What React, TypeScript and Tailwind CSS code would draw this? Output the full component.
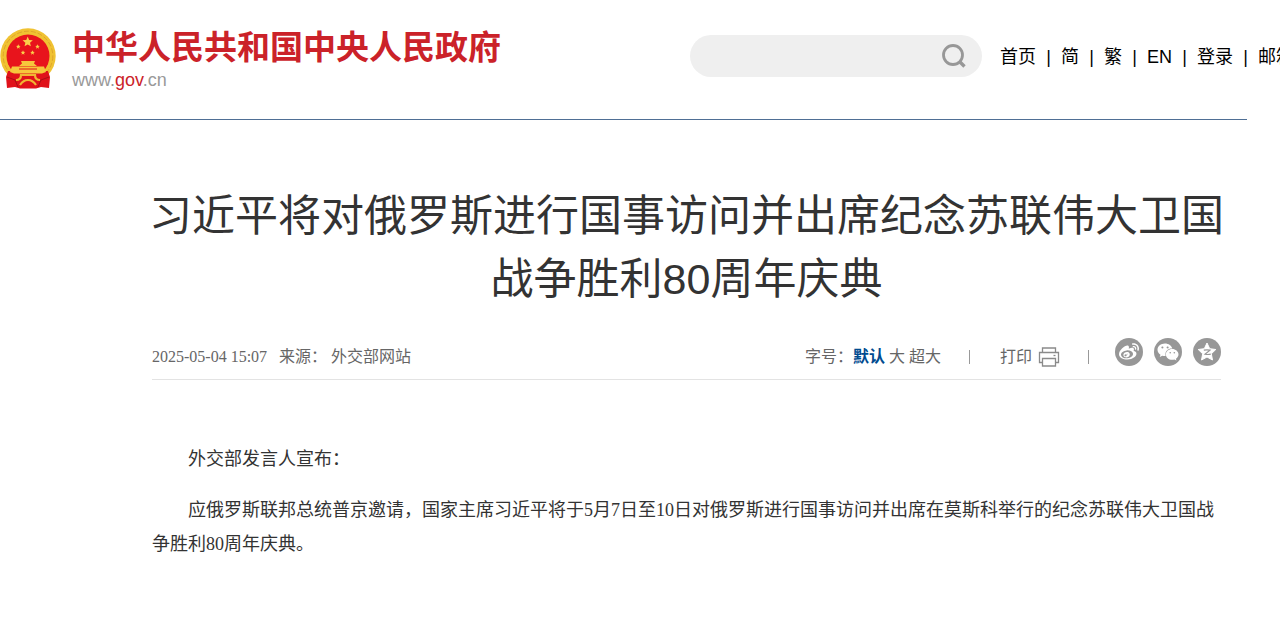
import { FaWeibo, FaWeixin } from 'react-icons/fa';

const navLinks = ['首页', '简', '繁', 'EN', '登录', '邮箱'];

const fontSizes = ['默认', '大', '超大'];

const Star = ({ cx, cy, r }: { cx: number; cy: number; r: number }) => {
  const points = Array.from({ length: 10 }, (_, i) => {
    const radius = i % 2 === 0 ? r : r * 0.45;
    const angle = (Math.PI / 5) * i - Math.PI / 2;
    return `${cx + radius * Math.cos(angle)},${cy + radius * Math.sin(angle)}`;
  });
  return <polygon points={points.join(' ')} />;
};

const Emblem = () => (
  <svg viewBox="0 0 56 61" className="h-[61px] w-14 shrink-0" aria-hidden="true">
    <circle cx="28" cy="28" r="27.700" fill="#f0c232" />
    <circle cx="28" cy="28" r="24.800" fill="none" stroke="#e0a52a" strokeWidth="1" strokeDasharray="5 2" />
    <circle cx="28" cy="28" r="21.500" fill="#e8141c" />
    <g fill="#fbd04a">
      <Star cx={27.7} cy={14} r={5.4} />
      <Star cx={18.3} cy={18.7} r={2.4} />
      <Star cx={37.5} cy={18.7} r={2.4} />
      <Star cx={23} cy={24.7} r={2.4} />
      <Star cx={32.5} cy={24.7} r={2.4} />
    </g>
    {/* red drapery under the gate */}
    <path d="M8 43h40l2 6-1 11-8-1-5 1.500H20L15 59l-8 1-1-11z" fill="#e0121a" />
    {/* gate */}
    <g fill="#f6c73c">
      <path d="M21 33h14l-1 2.500 3 2.500h-18l3-2.500z" />
      <path d="M12 38.500h32l2 5.500-4 1.500H14L10 44z" />
    </g>
    <path d="M19 41h18" stroke="#e0121a" strokeWidth="1" />
    {/* gear and ribbon */}
    <path
      d="M16 52c4 0 5-3 5-5h14c0 2 1 5 5 5M20 57c2-3 4-5 8-5s6 2 8 5"
      fill="none"
      stroke="#f0b632"
      strokeWidth="2.200"
    />
    <path d="M7 49l8 3 3 7M49 49l-8 3-3 7" fill="none" stroke="#a90f15" strokeWidth="1" />
  </svg>
);

const SearchIcon = () => (
  <svg viewBox="0 0 24 24" className="size-6" fill="none" stroke="#979797" strokeWidth="2.800">
    <circle cx="11" cy="11" r="9.500" />
    <path d="M17.500 17.500l5 5" strokeWidth="3.400" />
  </svg>
);

const PrinterIcon = () => (
  <svg viewBox="0 0 22 20" className="h-5 w-[22px]" fill="none" stroke="#8a8a8a" strokeWidth="1.300">
    <path d="M4.500 5.500V1h13v4.500M4.500 15.500H1.500v-10h19v10h-3" />
    <path d="M4.500 11.500h13V19h-13z" />
    <path d="M15.500 8.500h2" />
  </svg>
);

const QzoneIcon = () => (
  <svg viewBox="0 0 20 20" className="size-5">
    <path
      d="M10 1l2.700 5.700 6.100.8-4.500 4.300 1.200 6.200L10 15l-5.500 3 1.200-6.200L1.200 7.500l6.100-.8z"
      fill="#fff"
      stroke="#fff"
      strokeLinejoin="round"
    />
    <path d="M6.800 8.200c2-.4 4.200-.4 6.200 0l-5 4c1.800.4 3.800.4 5.800 0" fill="none" stroke="#979797" strokeWidth="1.200" />
  </svg>
);

const shareLinks = [
  { label: '微博', icon: <FaWeibo className="size-5" /> },
  { label: '微信', icon: <FaWeixin className="size-[22px]" /> },
  { label: 'QQ空间', icon: <QzoneIcon /> },
];

const Header = () => (
  <header className="mr-[33px] flex h-[120px] items-start border-b border-[#4f6f95] pt-7">
    <a href="#" className="flex shrink-0 items-start gap-4">
      <Emblem />
      <span className="flex flex-col">
        <span className="text-[33px] leading-10 font-bold text-[#cb2229]">中华人民共和国中央人民政府</span>
        <span className="text-lg leading-6 text-[#999]">
          www.<span className="text-[#cb2229]">gov</span>.cn
        </span>
      </span>
    </a>
    <div className="flex flex-1 shrink-0 items-center justify-end pt-[7px]">
      <form className="flex h-[42px] w-[292px] shrink-0 items-center rounded-full bg-[#efefef] pr-4 pl-5">
        <input type="text" aria-label="搜索" className="min-w-0 flex-1 bg-transparent outline-none" />
        <button type="button" aria-label="搜索">
          <SearchIcon />
        </button>
      </form>
      <nav className="-mr-[47px] ml-[18px] flex shrink-0 pt-0.5 text-lg leading-7 whitespace-nowrap text-black">
        {navLinks.map((link, i) => (
          <span key={link} className="flex">
            {i > 0 && <span className="w-[25px] text-center">|</span>}
            <a href="#">{link}</a>
          </span>
        ))}
      </nav>
    </div>
  </header>
);

const ArticleMeta = () => (
  <div className="flex h-[45px] items-center justify-between border-b border-[#e3e3e3] font-['Liberation_Serif','Noto_Sans_CJK_SC',serif] text-base text-[#666]">
    <div className="flex gap-3">
      <time>2025-05-04 15:07</time>
      <span>来源： 外交部网站</span>
    </div>
    <div className="flex items-center">
      <div className="flex gap-1">
        <span className="-mr-1">字号：</span>
        {fontSizes.map((size, i) => (
          <button key={size} type="button" className={i === 0 ? 'font-bold text-[#004a8f]' : ''}>
            {size}
          </button>
        ))}
      </div>
      <span className="ml-7 h-3.5 w-px bg-[#999]" />
      <button type="button" className="ml-[30px] flex items-center gap-1.5">
        打印
        <PrinterIcon />
      </button>
      <span className="ml-7 h-3.5 w-px bg-[#999]" />
      <div className="ml-[26px] flex gap-[11px] pb-2.5">
        {shareLinks.map(({ label, icon }) => (
          <a
            key={label}
            href="#"
            aria-label={label}
            className="flex size-7 items-center justify-center rounded-full bg-[#979797] text-white"
          >
            {icon}
          </a>
        ))}
      </div>
    </div>
  </div>
);

export default function App() {
  return (
    <div className="min-h-screen overflow-x-hidden bg-white font-['Liberation_Sans','Noto_Sans_CJK_SC',sans-serif]" lang="zh-CN">
      <Header />
      <main className="mr-[59px] ml-[152px] pt-[65px] pb-16">
        <h1 className="-mx-1 mb-6 text-center text-[43px] leading-[63px] text-[#333]">
          习近平将对俄罗斯进行国事访问并出席纪念苏联伟大卫国战争胜利80周年庆典
        </h1>
        <ArticleMeta />
        <article className="space-y-[17px] pt-[62px] font-['Liberation_Serif','Noto_Sans_CJK_SC',serif] text-lg leading-[34px] text-[#333]">
          <p className="indent-9">外交部发言人宣布：</p>
          <p className="indent-9">
            应俄罗斯联邦总统普京邀请，国家主席习近平将于5月7日至10日对俄罗斯进行国事访问并出席在莫斯科举行的纪念苏联伟大卫国战争胜利80周年庆典。
          </p>
        </article>
      </main>
    </div>
  );
}
